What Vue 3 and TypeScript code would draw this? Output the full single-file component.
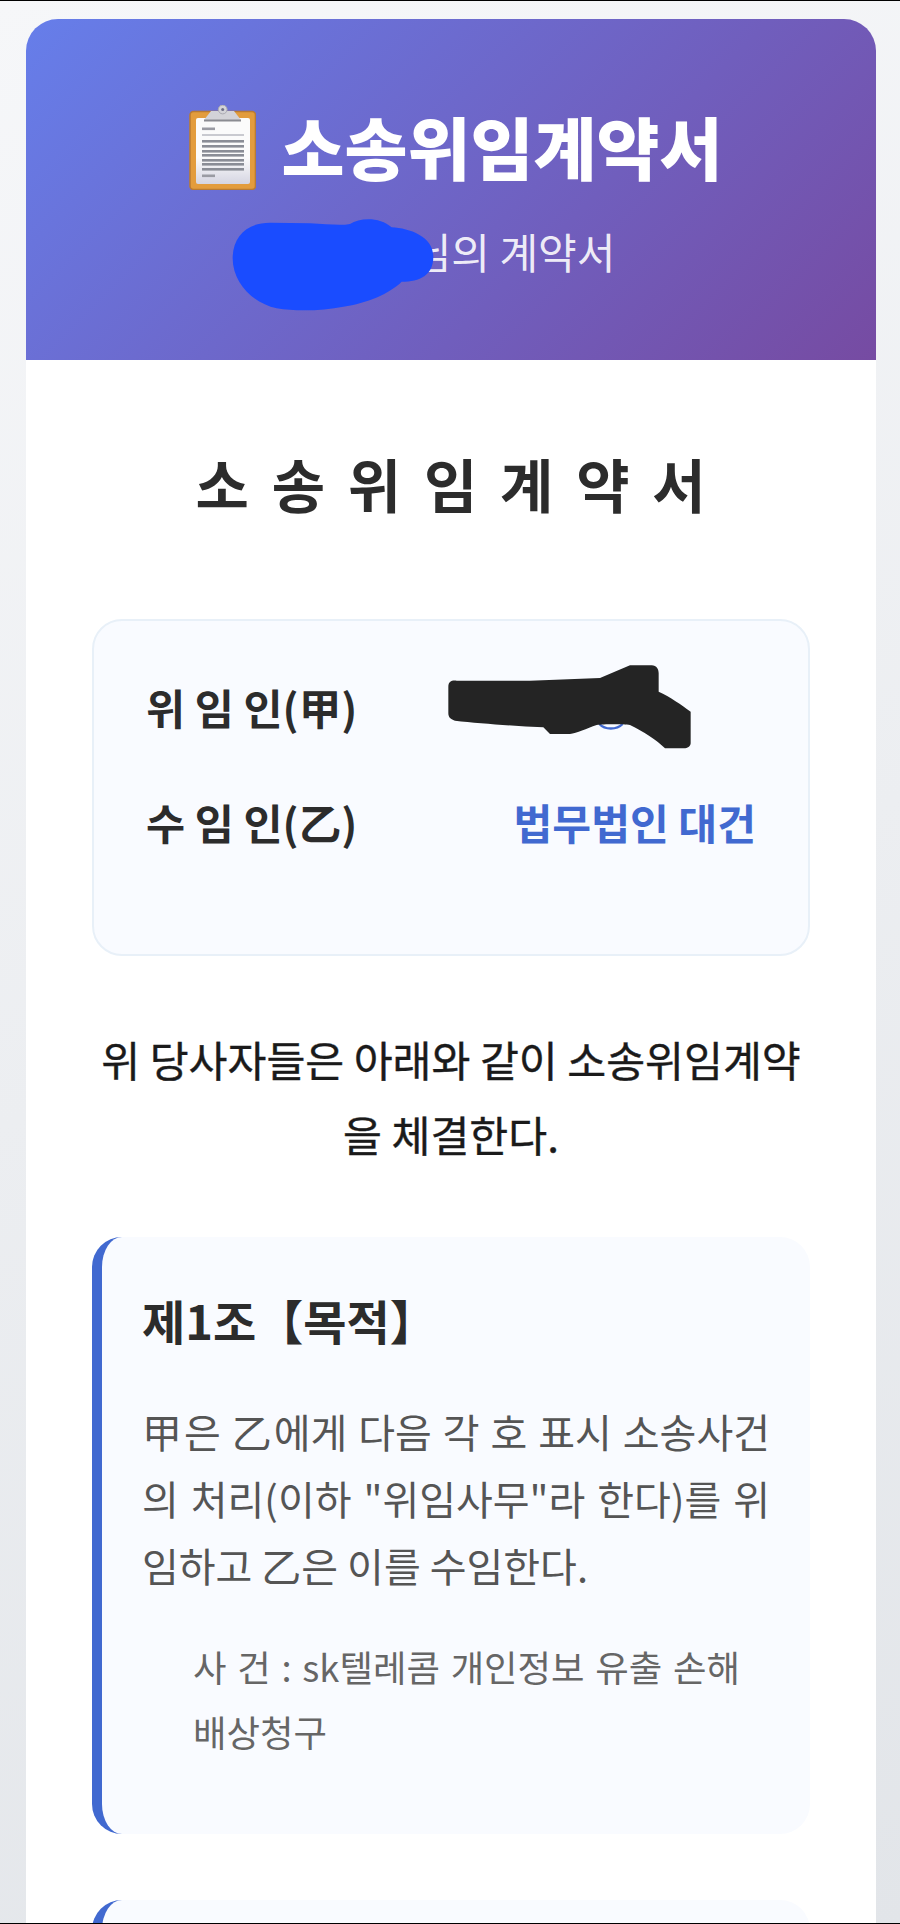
<script setup lang="ts">
interface Party { label: string; value: string; redacted?: boolean }
const parties: Party[] = [
  { label: '위 임 인(甲)', value: '', redacted: true },
  { label: '수 임 인(乙)', value: '법무법인 대건' },
]
const lineYs: number[] = [50, 55, 60, 64, 69, 73, 78]
</script>

<template>
  <div class="page">
    <main class="card">
      <header class="hero">
        <h1 class="hero-title">
          <svg class="clip" viewBox="28 15 67 85" aria-hidden="true">
            <defs>
              <linearGradient id="paper" x1="0" y1="0" x2="0" y2="1">
                <stop offset="0.6" stop-color="#fbfbfb" />
                <stop offset="1" stop-color="#d5d5e2" />
              </linearGradient>
            </defs>
            <rect x="29" y="21.5" width="65.5" height="78" rx="3.5" fill="#e39c3d" stroke="#b97b35" stroke-width="1.6" />
            <rect x="35" y="28" width="54" height="66" rx="2" fill="url(#paper)" />
            <path d="M50 21 L73 21 L80 30 L43 30 Z" fill="#d3d3d8" />
            <rect x="43" y="29.5" width="37" height="2" fill="#8b8c92" />
            <circle cx="61.7" cy="19.5" r="4.4" fill="#d3d3d8" stroke="#a9a9b0" stroke-width="1" />
            <circle cx="61.7" cy="19.5" r="1.5" fill="#6d6f86" />
            <rect x="41" y="37.5" width="13" height="2.6" fill="#9a9ba3" />
            <rect x="41" y="44" width="42" height="2" fill="#c9cad0" />
            <rect v-for="y in lineYs" :key="y" x="41" :y="y" width="42" height="2.6" fill="#8a8d96" />
            <rect x="41" y="84.5" width="13" height="2.6" fill="#9a9ba3" />
          </svg>
          <span>소송위임계약서</span>
        </h1>
        <p class="hero-sub">○○○님의 계약서</p>
        <svg class="blot-blue" viewBox="0 0 720 390" aria-hidden="true">
          <path d="M68 175 C68 110 110 68 180 68 L300 70 C350 72 390 78 420 72 C450 52 510 50 545 82 C600 85 670 110 670 170 C670 225 630 245 575 245 C540 280 470 310 400 320 C340 332 260 335 200 325 C130 310 68 250 68 175 Z" fill="#1a4cff" />
        </svg>
      </header>

      <section class="content">
        <h2 class="doc-title">소 송 위 임 계 약 서</h2>

        <div class="parties">
          <div v-for="p in parties" :key="p.label" class="party">
            <span class="party-label">{{ p.label }}</span>
            <span class="party-value">{{ p.value }}</span>
          </div>
          <svg class="blot-black" viewBox="0 0 840 330" aria-hidden="true">
            <path d="M508 222 C525 240 560 240 578 222" fill="none" stroke="#4169d0" stroke-width="7" />
            <path d="M55 110 C55 95 65 90 80 92 L300 92 L510 84 L600 46 L665 46 C680 46 686 58 686 70 L686 125 C720 140 755 165 782 185 L782 280 C782 290 770 296 760 295 L705 295 C680 270 640 245 600 225 C580 222 520 222 500 225 C470 235 440 250 420 252 L360 252 L340 232 C250 228 150 220 75 212 C60 208 55 200 55 190 Z" fill="#242424" />
          </svg>
        </div>

        <p class="intro">위 당사자들은 아래와 같이 소송위임계약을 체결한다.</p>

        <article class="clause">
          <h3 class="clause-title">제1조【목적】</h3>
          <p class="clause-text">甲은 乙에게 다음 각 호 표시 소송사건의 처리(이하 "위임사무"라 한다)를 위임하고 乙은 이를 수임한다.</p>
          <p class="clause-sub">사 건 : sk텔레콤 개인정보 유출 손해 배상청구</p>
        </article>

        <article class="clause clause-next"></article>
      </section>
    </main>
  </div>
</template>

<style>
html, body { margin: 0; padding: 0; }
</style>

<style scoped>
.page {
  box-sizing: border-box;
  height: 1924px;
  overflow: hidden;
  padding: 18px 24px 0 26px;
  border-top: 1px solid #000;
  border-bottom: 1px solid #000;
  background: linear-gradient(160deg, #f6f7f9 0%, #e2e5e9 100%);
  font-family: "Noto Sans CJK KR", "Noto Sans", sans-serif;
}
.card {
  background: #fff;
  border-radius: 32px 32px 0 0;
  overflow: hidden;
  height: 1960px;
}
.hero {
  position: relative;
  height: 341px;
  box-sizing: border-box;
  padding-top: 81px;
  background: linear-gradient(135deg, #667eea 0%, #764ba2 100%);
  color: #fff;
  text-align: center;
}
.hero-title {
  display: flex;
  justify-content: center;
  align-items: center;
  gap: 25px;
  margin: 0 0 0 10px;
  font-size: 68.5px;
  line-height: 92px;
  font-weight: 900;
}
.clip { width: 67px; height: 85px; flex: none; margin-top: 3px; }
.hero-sub {
  margin: 23px 0 0;
  font-size: 42px;
  line-height: 72px;
  color: rgba(255, 255, 255, 0.9);
}
.blot-blue {
  position: absolute;
  left: 184px;
  top: 181px;
  width: 240px;
  height: 130px;
}
.content { padding: 78px 66px 0; }
.doc-title {
  margin: 0 0 91px;
  padding-left: 4px;
  text-align: center;
  font-size: 58px;
  line-height: 90px;
  letter-spacing: 4.8px;
  font-weight: 700;
  color: #2c2c2c;
}
.parties {
  position: relative;
  box-sizing: border-box;
  height: 337px;
  padding: 48px 52px 0 52px;
  background: #f9fbff;
  border: 2px solid #e8f0f8;
  border-radius: 30px;
}
.party {
  display: flex;
  justify-content: space-between;
  height: 75px;
  line-height: 75px;
  margin-bottom: 40px;
  font-size: 42.5px;
  font-weight: 600;
}
.party-label { color: #2c2c2c; }
.party-value { color: #4169d0; font-size: 42.2px; }
.blot-black {
  position: absolute;
  left: 336px;
  top: 29px;
  width: 280px;
  height: 110px;
}
.intro {
  margin: 65px 0 66px;
  text-align: center;
  font-size: 42.3px;
  line-height: 75px;
  font-weight: 400;
  color: #1a1a1a;
  -webkit-text-stroke: 0.4px #1a1a1a;
}
.clause {
  box-sizing: border-box;
  height: 597px;
  padding: 41px 40px 0 40px;
  background: #f9fbff;
  border-left: 10px solid #4169d0;
  border-radius: 30px;
}
.clause-title {
  margin: 0 0 37px;
  font-size: 47px;
  line-height: 83px;
  font-weight: 700;
  color: #2c2c2c;
}
.clause-text {
  margin: 0 0 35px;
  font-size: 40px;
  line-height: 67px;
  color: #555;
  text-align: justify;
}
.clause-sub {
  margin: 0 0 0 51px;
  font-size: 36.4px;
  word-spacing: 2.6px;
  line-height: 65px;
  color: #666;
}
.clause-next { margin-top: 66px; }
</style>
